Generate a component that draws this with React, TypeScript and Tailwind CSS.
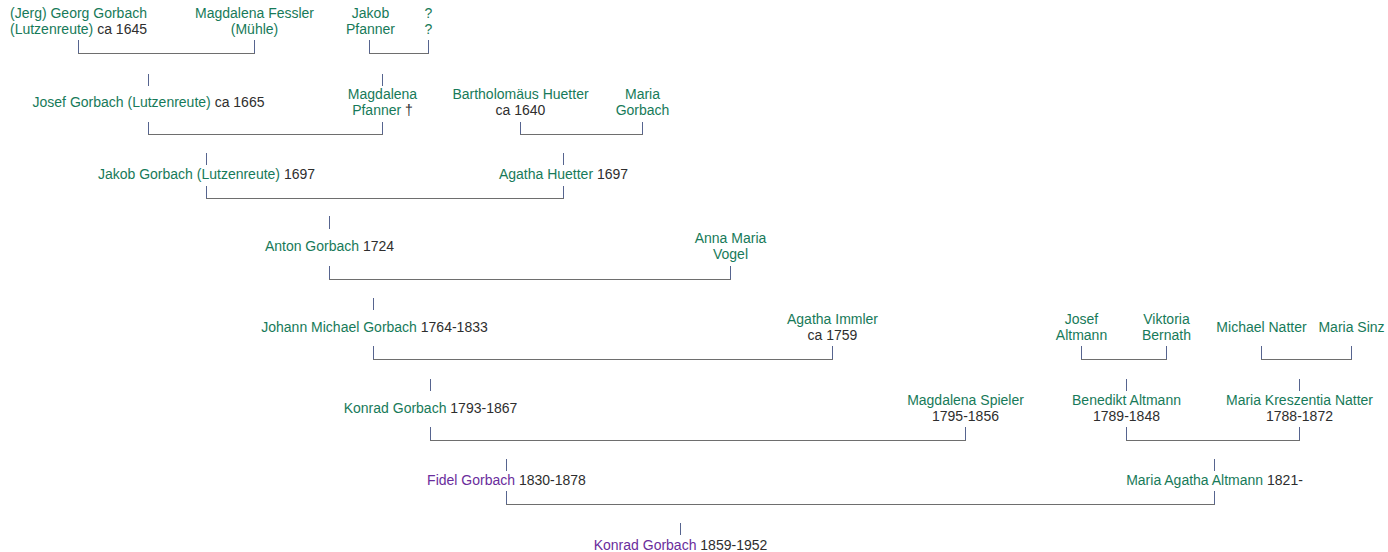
import React from "react";

type Seg = { t: string; c?: "g" | "d" | "p" };
type Node = { pos: string; lines: Seg[][] };
type Row = {
  h: string;
  topTicks?: string[];
  tickBox?: string;
  textBox: string;
  nodes: Node[];
  bottomTicks?: string[];
  bBox?: string;
  lines?: string[];
  lineTop?: string;
};

const g = (t: string): Seg => ({ t, c: "g" });
const d = (t: string): Seg => ({ t, c: "d" });
const p = (t: string): Seg => ({ t, c: "p" });

const rows: Row[] = [
  {
    h: "h-[54px]",
    textBox: "top-[5px] h-[32px]",
    nodes: [
      { pos: "left-[78.5px]", lines: [[g("(Jerg) Georg Gorbach")], [g("(Lutzenreute)"), d(" ca 1645")]] },
      { pos: "left-[254.5px]", lines: [[g("Magdalena Fessler")], [g("(Mühle)")]] },
      { pos: "left-[370.5px]", lines: [[g("Jakob")], [g("Pfanner")]] },
      { pos: "left-[428.5px]", lines: [[g("?")], [g("?")]] },
    ],
    bottomTicks: ["left-[78px]", "left-[254px]", "left-[369px]", "left-[428px]"],
    bBox: "top-[40px] h-[13px]",
    lines: ["left-[78px] w-[177px]", "left-[369px] w-[60px]"],
    lineTop: "top-[53px]",
  },
  {
    h: "h-[81px]",
    topTicks: ["left-[148px]", "left-[382px]"],
    tickBox: "top-[20px] h-[12px]",
    textBox: "top-[32px] h-[32px]",
    nodes: [
      { pos: "left-[148.5px]", lines: [[g("Josef Gorbach (Lutzenreute)"), d(" ca 1665")]] },
      { pos: "left-[382.5px]", lines: [[g("Magdalena")], [g("Pfanner"), d(" †")]] },
      { pos: "left-[520.5px]", lines: [[g("Bartholomäus Huetter")], [d("ca 1640")]] },
      { pos: "left-[642.5px]", lines: [[g("Maria")], [g("Gorbach")]] },
    ],
    bottomTicks: ["left-[148px]", "left-[382px]", "left-[520px]", "left-[642px]"],
    bBox: "top-[68px] h-[12px]",
    lines: ["left-[148px] w-[235px]", "left-[520px] w-[123px]"],
    lineTop: "top-[80px]",
  },
  {
    h: "h-[64px]",
    topTicks: ["left-[206px]", "left-[563px]"],
    tickBox: "top-[18px] h-[12px]",
    textBox: "top-[31px] h-[16px]",
    nodes: [
      { pos: "left-[206.5px]", lines: [[g("Jakob Gorbach (Lutzenreute)"), d(" 1697")]] },
      { pos: "left-[563.5px]", lines: [[g("Agatha Huetter"), d(" 1697")]] },
    ],
    bottomTicks: ["left-[206px]", "left-[563px]"],
    bBox: "top-[51px] h-[12px]",
    lines: ["left-[206px] w-[358px]"],
    lineTop: "top-[63px]",
  },
  {
    h: "h-[81px]",
    topTicks: ["left-[329px]"],
    tickBox: "top-[17px] h-[13px]",
    textBox: "top-[31px] h-[32px]",
    nodes: [
      { pos: "left-[329.5px]", lines: [[g("Anton Gorbach"), d(" 1724")]] },
      { pos: "left-[730.5px]", lines: [[g("Anna Maria")], [g("Vogel")]] },
    ],
    bottomTicks: ["left-[329px]", "left-[730px]"],
    bBox: "top-[67px] h-[13px]",
    lines: ["left-[329px] w-[402px]"],
    lineTop: "top-[80px]",
  },
  {
    h: "h-[80px]",
    topTicks: ["left-[373px]"],
    tickBox: "top-[18px] h-[12px]",
    textBox: "top-[31px] h-[32px]",
    nodes: [
      { pos: "left-[374.5px]", lines: [[g("Johann Michael Gorbach"), d(" 1764-1833")]] },
      { pos: "left-[832.5px]", lines: [[g("Agatha Immler")], [d("ca 1759")]] },
      { pos: "left-[1081.5px]", lines: [[g("Josef")], [g("Altmann")]] },
      { pos: "left-[1166.5px]", lines: [[g("Viktoria")], [g("Bernath")]] },
      { pos: "left-[1261.5px]", lines: [[g("Michael Natter")]] },
      { pos: "left-[1351.5px]", lines: [[g("Maria Sinz")]] },
    ],
    bottomTicks: [
      "left-[373px]",
      "left-[832px]",
      "left-[1081px]",
      "left-[1166px]",
      "left-[1261px]",
      "left-[1351px]",
    ],
    bBox: "top-[66px] h-[13px]",
    lines: ["left-[373px] w-[460px]", "left-[1081px] w-[86px]", "left-[1261px] w-[91px]"],
    lineTop: "top-[79px]",
  },
  {
    h: "h-[81px]",
    topTicks: ["left-[430px]", "left-[1126px]", "left-[1299px]"],
    tickBox: "top-[19px] h-[12px]",
    textBox: "top-[32px] h-[32px]",
    nodes: [
      { pos: "left-[430.5px]", lines: [[g("Konrad Gorbach"), d(" 1793-1867")]] },
      { pos: "left-[965.5px]", lines: [[g("Magdalena Spieler")], [d("1795-1856")]] },
      { pos: "left-[1126.5px]", lines: [[g("Benedikt Altmann")], [d("1789-1848")]] },
      { pos: "left-[1299.5px]", lines: [[g("Maria Kreszentia Natter")], [d("1788-1872")]] },
    ],
    bottomTicks: ["left-[430px]", "left-[965px]", "left-[1126px]", "left-[1299px]"],
    bBox: "top-[67px] h-[13px]",
    lines: ["left-[430px] w-[536px]", "left-[1126px] w-[174px]"],
    lineTop: "top-[80px]",
  },
  {
    h: "h-[64px]",
    topTicks: ["left-[506px]", "left-[1214px]"],
    tickBox: "top-[18px] h-[12px]",
    textBox: "top-[31px] h-[16px]",
    nodes: [
      { pos: "left-[506.5px]", lines: [[p("Fidel Gorbach"), d(" 1830-1878")]] },
      { pos: "left-[1214.5px]", lines: [[g("Maria Agatha Altmann"), d(" 1821-")]] },
    ],
    bottomTicks: ["left-[506px]", "left-[1214px]"],
    bBox: "top-[50px] h-[13px]",
    lines: ["left-[506px] w-[709px]"],
    lineTop: "top-[63px]",
  },
  {
    h: "h-[47px]",
    topTicks: ["left-[680px]"],
    tickBox: "top-[18px] h-[12px]",
    textBox: "top-[32px] h-[16px]",
    nodes: [{ pos: "left-[680.5px]", lines: [[p("Konrad Gorbach"), d(" 1859-1952")]] }],
  },
];

const colorClass = (c?: string) =>
  c === "p" ? "text-[#6a2d9c]" : c === "d" ? "text-[#2e2e2e]" : "text-[#177a59]";

function GenRow({ r }: { r: Row }) {
  return (
    <div className={`relative w-full shrink-0 ${r.h}`}>
      {r.topTicks?.map((x) => (
        <div key={"t" + x} className={`absolute w-px bg-[#56648f] ${x} ${r.tickBox}`} />
      ))}
      <div className={`absolute left-0 right-0 ${r.textBox}`}>
        {r.nodes.map((n) => (
          <div
            key={n.pos}
            className={`absolute top-0 h-full -translate-x-1/2 flex flex-col justify-center items-center whitespace-nowrap text-center ${n.pos}`}
          >
            {n.lines.map((ln, i) => (
              <div key={i} className="leading-[16px]">
                {ln.map((s, j) => (
                  <span key={j} className={colorClass(s.c)}>
                    {s.t}
                  </span>
                ))}
              </div>
            ))}
          </div>
        ))}
      </div>
      {r.bottomTicks?.map((x) => (
        <div key={"b" + x} className={`absolute w-px bg-[#56648f] ${x} ${r.bBox}`} />
      ))}
      {r.lines?.map((l) => (
        <div key={"l" + l} className={`absolute h-px bg-[#6e6e6e] ${l} ${r.lineTop}`} />
      ))}
    </div>
  );
}

export default function App() {
  return (
    <div className="w-[1388px] h-[552px] bg-white overflow-hidden font-['Liberation_Sans',Arial,sans-serif] text-[14px] flex flex-col">
      {rows.map((r, i) => (
        <GenRow key={i} r={r} />
      ))}
    </div>
  );
}
